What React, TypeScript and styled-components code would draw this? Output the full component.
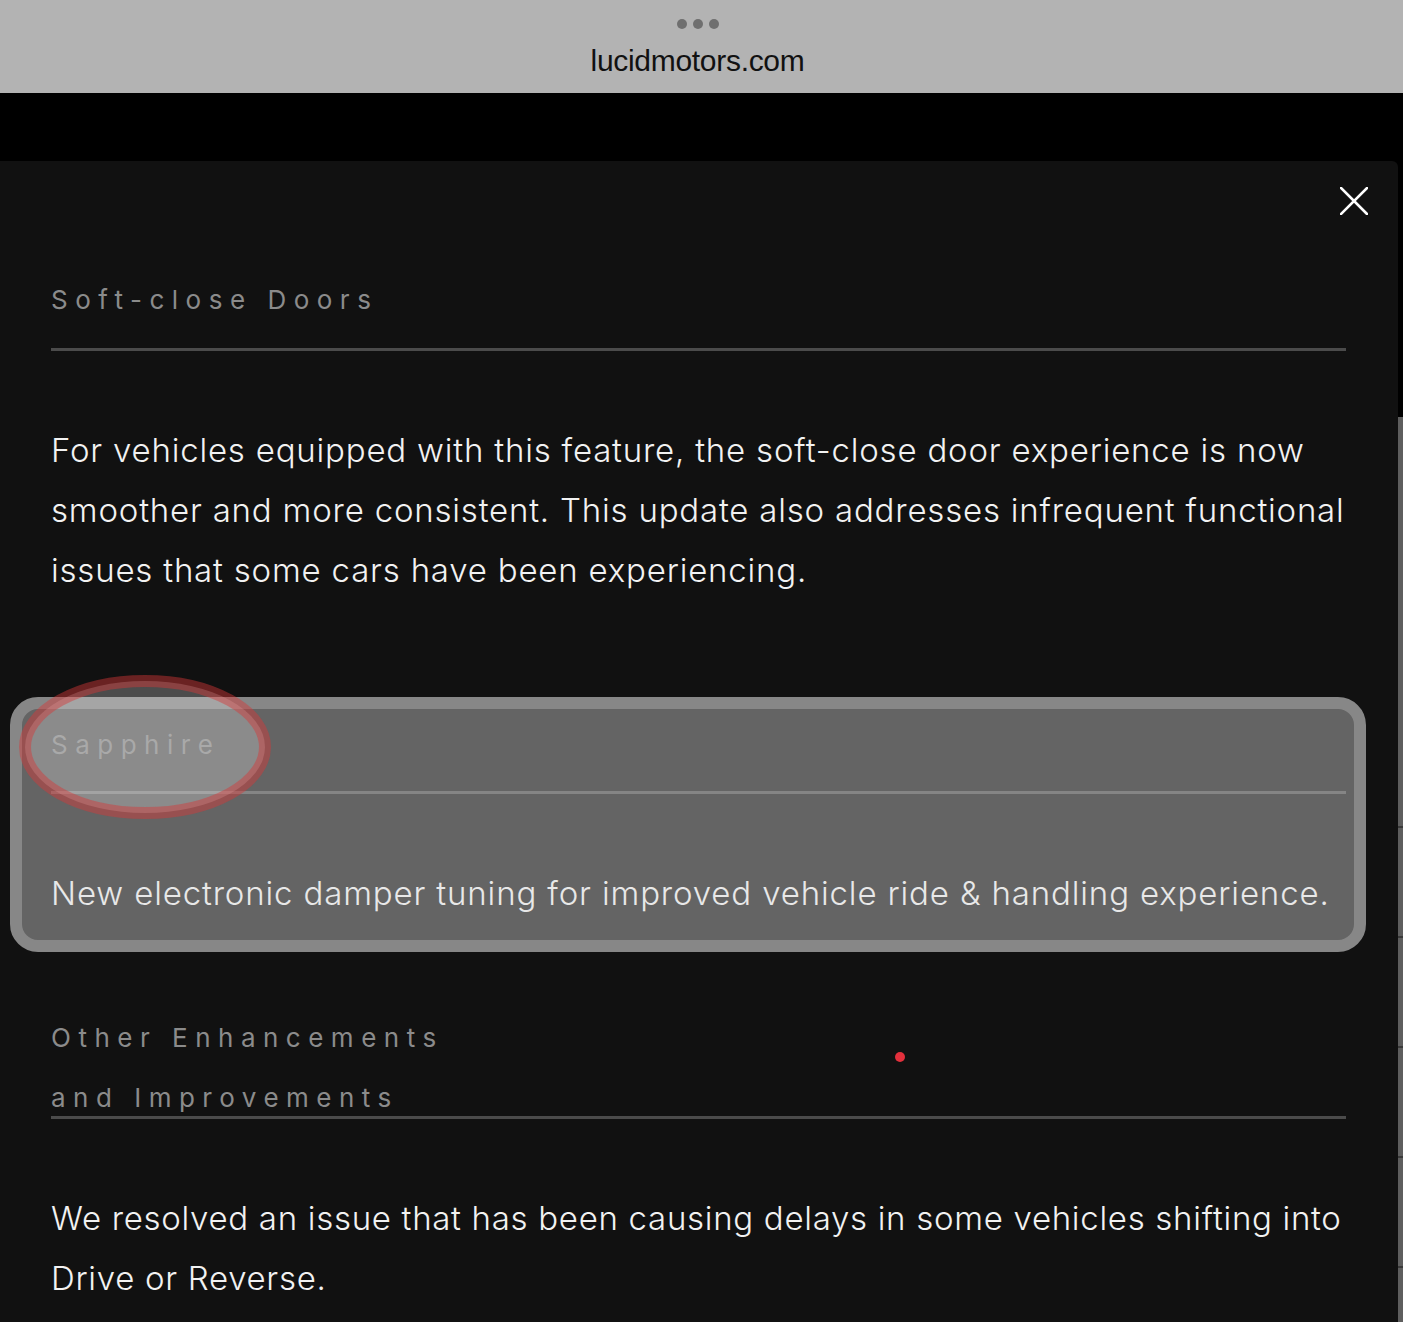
import React from "react";
import styled, { createGlobalStyle } from "styled-components";

const GlobalStyle = createGlobalStyle`
  html, body { margin: 0; padding: 0; background: #000; }
  body { font-family: Inter, "Noto Sans", sans-serif; -webkit-font-smoothing: antialiased; }
  * { box-sizing: border-box; }
`;

const Page = styled.div`
  width: 1403px;
  height: 1322px;
  overflow: hidden;
  display: flex;
  flex-direction: column;
  background: #000;
`;

const BrowserBar = styled.header`
  height: 93px;
  flex: none;
  background: #b3b3b3;
  display: flex;
  flex-direction: column;
  align-items: center;
  padding: 19px 8px 0 0;
`;

const Dots = styled.div`
  display: flex;
  gap: 6px;
`;

const Dot = styled.span`
  width: 10px;
  height: 10px;
  border-radius: 50%;
  background: #6f6f6f;
`;

const Url = styled.div`
  margin-top: 17px;
  font-family: "Liberation Sans", Arial, sans-serif;
  font-size: 30px;
  line-height: 30px;
  letter-spacing: -0.3px;
  color: #111;
`;

const Backdrop = styled.div`
  flex: 1;
  display: flex;
  flex-direction: column;
  padding-top: 68px;
  background: #000;
`;

const Stage = styled.div`
  flex: 1;
  display: flex;
`;

const Panel = styled.section`
  position: relative;
  flex: 1 1 0;
  min-width: 0;
  background: #111111;
  border-top-right-radius: 6px;
  padding: 26px 52px 0 51px;
  display: flex;
  flex-direction: column;
`;

const TopRow = styled.div`
  display: flex;
  justify-content: flex-end;
  margin-right: -22px;
`;

const CloseButton = styled.button`
  width: 28px;
  height: 28px;
  padding: 0;
  border: 0;
  background: none;
  display: block;
  cursor: pointer;
`;

const Heading = styled.h3<{ $top: number; $color: string }>`
  margin: ${(p) => p.$top}px 0 0;
  font-family: Inter, "Noto Sans", sans-serif;
  font-weight: 400;
  font-size: 26px;
  line-height: 60px;
  letter-spacing: 7.5px;
  color: ${(p) => p.$color};
`;

const Rule = styled.div<{ $offset: number; $color: string }>`
  height: 3px;
  margin-top: ${(p) => p.$offset}px;
  background: ${(p) => p.$color};
`;

const Body = styled.p<{ $color: string; $spacing?: number }>`
  margin: 69px 0 0;
  font-family: Inter, "Noto Sans", sans-serif;
  font-weight: 300;
  font-size: 33px;
  line-height: 60px;
  letter-spacing: ${(p) => p.$spacing ?? 0.8}px;
  white-space: nowrap;
  color: ${(p) => p.$color};
`;

const Highlight = styled.div`
  position: relative;
  margin: 97px -20px 0 -41px;
  padding: 6px 8px 17px 29px;
  border: 12px solid #878787;
  border-radius: 28px;
  background: #646464;
`;

const CircleMark = styled.svg`
  position: absolute;
  left: -9px;
  top: -40px;
  width: 264px;
  height: 156px;
  pointer-events: none;
`;

const RedDot = styled.span`
  position: absolute;
  left: 895px;
  top: 891px;
  width: 10px;
  height: 10px;
  border-radius: 50%;
  background: #e3303c;
`;

const Edge = styled.aside`
  width: 5px;
  flex: none;
  display: flex;
  flex-direction: column;
`;

const EdgeTop = styled.div`
  height: 256px;
  flex: none;
  background: #000;
`;

const EdgeRail = styled.div`
  flex: 1;
  display: flex;
  flex-direction: column;
  background: #5e5e5e;
`;

const EdgeSegment = styled.div<{ $h: number; $line?: boolean }>`
  height: ${(p) => p.$h}px;
  flex: none;
  border-top: ${(p) => (p.$line ? "2px solid #3a3a3a" : "0")};
`;

const Lines = ({ lines }: { lines: string[] }) => (
  <>
    {lines.map((l, i) => (
      <React.Fragment key={i}>
        {l}
        {i < lines.length - 1 && <br />}
      </React.Fragment>
    ))}
  </>
);

export default function App() {
  return (
    <>
      <GlobalStyle />
      <Page>
        <BrowserBar>
          <Dots>
            <Dot />
            <Dot />
            <Dot />
          </Dots>
          <Url>lucidmotors.com</Url>
        </BrowserBar>
        <Backdrop>
          <Stage>
            <Panel>
              <TopRow>
                <CloseButton aria-label="Close">
                  <svg width="28" height="28" viewBox="0 0 28 28">
                    <path d="M1 1L27 27M27 1L1 27" stroke="#fff" strokeWidth="2.6" strokeLinecap="square" fill="none" />
                  </svg>
                </CloseButton>
              </TopRow>

              <Heading $top={55} $color="#8b8b8b">Soft-close Doors</Heading>
              <Rule $offset={18} $color="#4b4b4b" />
              <Body $color="#f2f2f2">
                <Lines
                  lines={[
                    "For vehicles equipped with this feature, the soft-close door experience is now",
                    "smoother and more consistent. This update also addresses infrequent functional",
                    "issues that some cars have been experiencing.",
                  ]}
                />
              </Body>

              <Highlight>
                <Heading $top={0} $color="#8c8c8c">Sapphire</Heading>
                <Rule $offset={16} $color="#858585" />
                <Body $color="#e8e8e8" $spacing={0.85}>
                  New electronic damper tuning for improved vehicle ride &amp; handling experience.
                </Body>
                <CircleMark viewBox="0 0 264 156">
                  <ellipse cx="132" cy="78" rx="120" ry="66" fill="rgba(255,255,255,0.25)" stroke="rgba(215,55,55,0.45)" strokeWidth="12" />
                </CircleMark>
              </Highlight>

              <Heading $top={56} $color="#8b8b8b">
                <Lines lines={["Other Enhancements", "and Improvements"]} />
              </Heading>
              <Rule $offset={-12} $color="#4b4b4b" />
              <Body $color="#f2f2f2" $spacing={0.7}>
                <Lines
                  lines={[
                    "We resolved an issue that has been causing delays in some vehicles shifting into",
                    "Drive or Reverse.",
                  ]}
                />
              </Body>

              <RedDot />
            </Panel>
            <Edge>
              <EdgeTop />
              <EdgeRail>
                <EdgeSegment $h={409} />
                <EdgeSegment $h={110} $line />
                <EdgeSegment $h={110} $line />
                <EdgeSegment $h={110} $line />
                <EdgeSegment $h={110} $line />
                <EdgeSegment $h={110} $line />
              </EdgeRail>
            </Edge>
          </Stage>
        </Backdrop>
      </Page>
    </>
  );
}
